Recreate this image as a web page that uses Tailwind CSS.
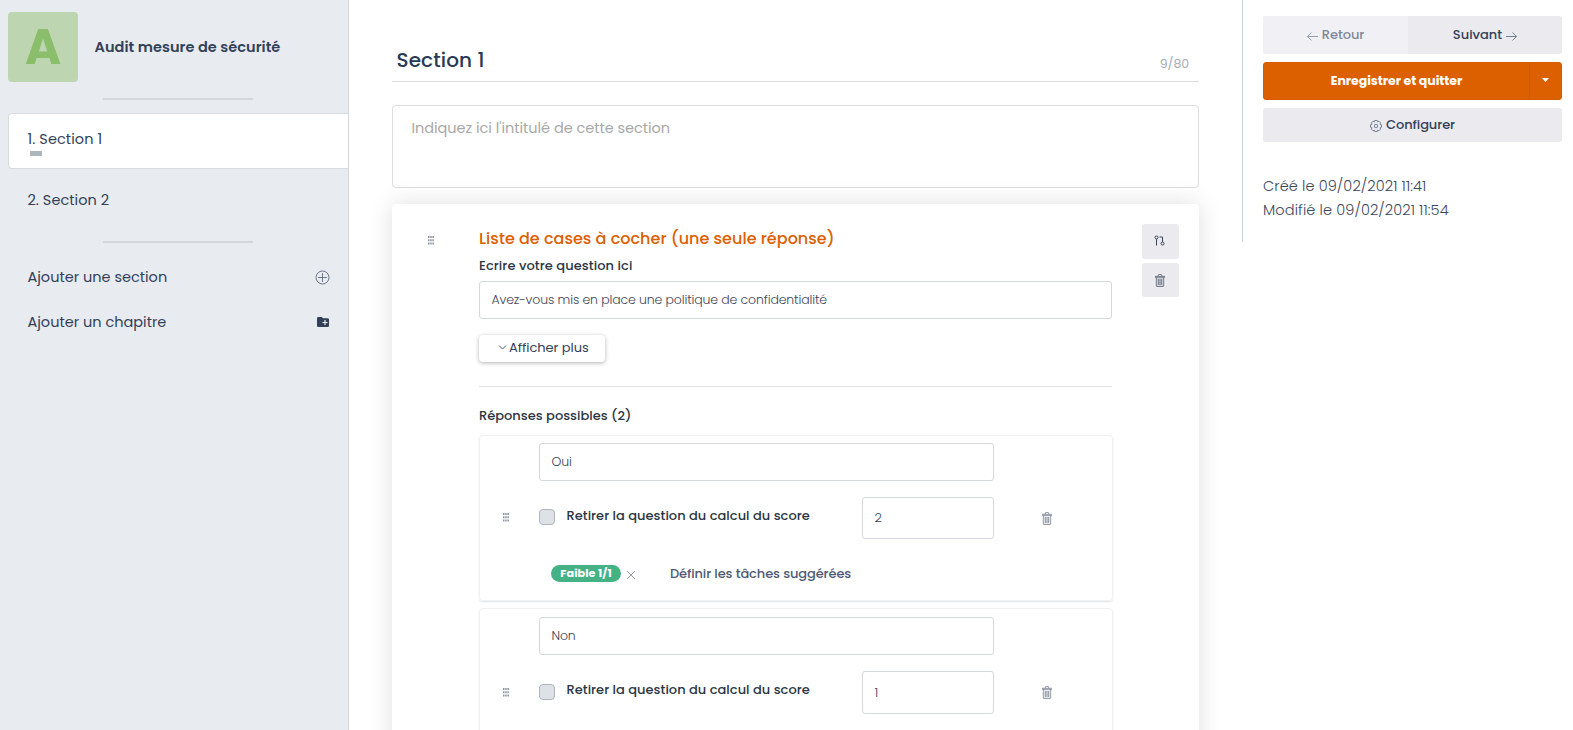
<!DOCTYPE html>
<html lang="fr">
<head>
<meta charset="utf-8">
<title>Audit mesure de sécurité</title>
<script src="https://cdn.jsdelivr.net/npm/@tailwindcss/browser@4"></script>
</head>
<body class="flex h-[730px] overflow-hidden bg-white font-['Poppins','Inter',sans-serif] text-[#324158]">

<svg class="hidden">
  <symbol id="grip" viewBox="0 0 6 9"><path fill="currentColor" d="M0 0h1.500v2H0zM2.200 0h1.500v2H2.200zM4.400 0h1.500v2H4.400zM0 3.200h1.500v2H0zM2.200 3.200h1.500v2H2.200zM4.400 3.200h1.500v2H4.400zM0 6.400h1.500v2H0zM2.200 6.400h1.500v2H2.200zM4.400 6.400h1.500v2H4.400z"/></symbol>
  <symbol id="trash" viewBox="0 0 10 13"><path fill="currentColor" fill-opacity=".18" d="M0 2h10v2H9v9H1V4H0z"/><g fill="none" stroke="currentColor" stroke-width=".8"><path d="M0 2.300h10M0 3.300h10M3.300 2V1q0-.5.5-.5h2.400q.5 0 .5.5v1M1.300 3.200v8.600q0 .7.7.7h6q.7 0 .7-.7V3.200M3.400 5v6M5 5v6M6.600 5v6"/></g></symbol>
</svg>

<aside class="flex h-full w-[349px] shrink-0 flex-col border-r border-[#d3d7dc] bg-[#e8ebf0]">
  <div class="mt-3 ml-2 flex h-[70px] items-center gap-4">
    <div class="flex size-[70px] items-center justify-center rounded bg-[#bdd6b1] text-[49px] leading-none font-bold text-[#8bbe6a]">A</div>
    <h1 class="pt-0.5 pl-[0.5px] text-[14.5px] font-semibold tracking-[0.05px] whitespace-nowrap">Audit mesure de sécurité</h1>
  </div>
  <div class="mt-4 ml-[103px] h-0.5 w-[150px] bg-[#d3d7dc]"></div>
  <div class="mt-[13px] ml-2 h-14 rounded-l border border-r-0 border-[#d8dbdf] bg-white pl-[18.500px]">
    <div class="mt-4 text-[14.5px] leading-[18px] tracking-[0.08px]">1. Section 1</div>
    <div class="mt-[3px] ml-[2.500px] h-[5px] w-3 bg-[#adb5bd]"></div>
  </div>
  <div class="mt-[22px] ml-[27.500px] text-[14.5px] leading-[18px] tracking-[0.03px]">2. Section 2</div>
  <div class="mt-8 ml-[103px] h-0.5 w-[150px] bg-[#d3d7dc]"></div>
  <div class="mt-[25px] ml-[27.500px] flex h-[18px] items-center justify-between pr-[18px] text-[14.5px] leading-[18px]">
    <span>Ajouter une section</span>
    <svg class="size-[15px]" viewBox="0 0 15 15" fill="none" stroke="#6b788b"><circle cx="7.5" cy="7.5" r="6.5"/><path d="M7.5 3v9M3 7.5h9"/></svg>
  </div>
  <div class="mt-[27px] ml-[27.500px] flex h-[18px] items-center justify-between pr-[19px] text-[14.5px] leading-[18px]">
    <span>Ajouter un chapitre</span>
    <svg class="h-[10px] w-3" viewBox="0 0 12 10"><path fill="#324158" d="M1.200 0h3.600L6 1.200h4.800q1.200 0 1.200 1.200v6.400Q12 10 10.800 10H1.200Q0 10 0 8.800V1.200Q0 0 1.200 0z"/><path stroke="#e8ebf0" stroke-width="1.200" d="M8 3v5M5.500 5.500h5"/></svg>
  </div>
</aside>

<main class="h-full w-[893px] shrink-0 overflow-hidden px-[43px]">
  <div class="flex h-[82px] justify-between border-b border-[#dcdddf] pr-2.5 pl-[4.500px]">
    <h2 class="mt-[48px] text-[20px] leading-6 font-medium tracking-[0.1px] text-[#2a3953]">Section 1</h2>
    <span class="mt-[55px] text-[12.500px] leading-[18px] tracking-[-0.1px] text-[#a5adb8]">9/80</span>
  </div>
  <div class="mt-[23px] h-[83px] rounded border border-[#dcdddf] pt-[12px] pl-[18.500px] text-[14.5px] leading-[20px] tracking-[-0.03px] text-[#a8a8a8]">Indiquez ici l'intitulé de cette section</div>

  <section class="mt-4 flex h-[600px] rounded shadow-[0_0_24px_rgba(0,0,0,0.13)]">
    <div class="w-[87px] shrink-0 pt-8 pl-9"><svg class="h-[9px] w-1.5 text-[#8d95a3]"><use href="#grip"/></svg></div>
    <div class="w-[634px] shrink-0">
      <h3 class="mt-[24px] text-[16px] leading-[22px] font-medium tracking-[0.02px] text-[#dd6000]">Liste de cases à cocher (une seule réponse)</h3>
      <div class="mt-[7px] text-[13px] leading-[18px] font-medium tracking-[0.07px] text-[#2b3644]">Ecrire votre question ici</div>
      <div class="mt-[6px] flex h-[38px] w-[633px] items-center rounded-[3px] border border-[#d5d8df] pl-[11.500px] text-[12.500px] font-light tracking-[-0.13px] text-[#3c4457]">Avez-vous mis en place une politique de confidentialité</div>
      <div class="mt-4 flex h-[27px] w-[126px] items-center rounded pl-[19px] text-[13px] leading-none tracking-[-0.03px] shadow-[0_1px_4px_rgba(0,0,0,0.3)]">
        <svg class="mr-0.5 mb-1 h-2 w-[9px]" viewBox="0 0 9 8" fill="none" stroke="#4d5b70"><path d="m1 2.500 3.500 3.500L8 2.500"/></svg>
        <span class="mb-0.5">Afficher plus</span>
      </div>
      <div class="mt-6 h-px w-[633px] bg-[#e2e4e6]"></div>
      <div class="mt-5 text-[13px] leading-[18px] font-medium text-[#2b3644]">Réponses possibles (2)</div>

      <div class="mt-[10px] h-[166px] rounded border border-[#eff1f3] pt-[7px] shadow-[0_1px_2px_rgba(40,60,80,0.14)]">
        <div class="ml-[59px] flex h-[38px] w-[455px] items-center rounded-[3px] border border-[#d5d8df] pl-[11.500px] text-[12.500px] font-light tracking-[-0.1px] text-[#3c4457]">Oui</div>
        <div class="mt-4 flex h-[42px]">
          <svg class="mt-4 ml-[23px] h-[9px] w-1.5 text-[#8d95a3]"><use href="#grip"/></svg>
          <div class="mt-3 ml-[30px] size-4 rounded border border-[#adb5bd] bg-[#dee2e6]"></div>
          <div class="mt-[10px] ml-[11.500px] w-[295.500px] text-[13px] leading-[18px] font-medium tracking-[0.02px] text-[#2b3644]">Retirer la question du calcul du score</div>
          <div class="flex h-[42px] w-[132px] items-center rounded-[3px] border border-[#d5d8df] pl-[11.500px] text-[13px] font-light text-[#3c4457]">2</div>
          <svg class="mt-[15px] ml-12 h-[13px] w-2.5 text-[#7d8794]"><use href="#trash"/></svg>
        </div>
        <div class="mt-[24px] ml-[71px] flex h-[21px] items-center">
          <div class="flex h-[17px] w-[70px] items-center justify-center rounded-full bg-[#44b284] text-[11.200px] font-bold tracking-[0.08px] text-white">Faible 1/1</div>
          <svg class="mt-0.5 ml-1.5 size-2" viewBox="0 0 8 8" stroke="#7d8794" stroke-width=".8"><path d="m0 0 8 8M8 0 0 8"/></svg>
          <span class="ml-[35px] text-[13px] leading-[18px] font-medium tracking-[-0.11px] text-[#4f5a73]">Définir les tâches suggérées</span>
        </div>
      </div>

      <div class="mt-[7px] h-[168px] rounded border border-[#eff1f3] pt-2 shadow-[0_1px_2px_rgba(40,60,80,0.14)]">
        <div class="ml-[59px] flex h-[38px] w-[455px] items-center rounded-[3px] border border-[#d5d8df] pl-[11.500px] text-[12.500px] font-light tracking-[-0.2px] text-[#3c4457]">Non</div>
        <div class="mt-4 flex h-[43px]">
          <svg class="mt-[17px] ml-[23px] h-[9px] w-1.5 text-[#8d95a3]"><use href="#grip"/></svg>
          <div class="mt-[13px] ml-[30px] size-4 rounded border border-[#adb5bd] bg-[#dee2e6]"></div>
          <div class="mt-[10px] ml-[11.500px] w-[295.500px] text-[13px] leading-[18px] font-medium tracking-[0.02px] text-[#2b3644]">Retirer la question du calcul du score</div>
          <div class="flex h-[43px] w-[132px] items-center rounded-[3px] border border-[#d5d8df] pl-[11.500px] text-[13px] font-light text-[#3c4457]">1</div>
          <svg class="mt-[15px] ml-12 h-[13px] w-2.5 text-[#7d8794]"><use href="#trash"/></svg>
        </div>
      </div>
    </div>
    <div class="mt-5 ml-[29px] flex w-[37px] flex-col gap-1">
      <div class="flex h-[35px] items-center justify-center rounded-[3px] bg-[#eaeaef]">
        <svg class="mr-0.5 mb-0.5 size-[11px]" viewBox="0 0 11 11" fill="none" stroke="#3a4358"><circle cx="2.500" cy="2.500" r="1.500"/><path d="M2.500 4v6.500M5.500 2h3v5"/><circle cx="8.500" cy="8.500" r="1.500"/></svg>
      </div>
      <div class="flex h-[34px] items-center justify-center rounded-[3px] bg-[#eaeaef]"><svg class="mr-[1px] h-[13px] w-2.5 text-[#5f6a7a]"><use href="#trash"/></svg></div>
    </div>
  </section>
</main>

<aside class="h-[242px] w-[331px] shrink-0 border-l border-[#c5d0dc] pt-4 pl-5 text-[13px]">
  <div class="flex h-[38px] w-[299px] overflow-hidden rounded-[3px] bg-[#eaeaef] font-medium">
    <div class="flex w-[145px] items-center justify-center gap-1 bg-[#f1f0f5] tracking-[-0.08px] text-[#7f8898]">
      <svg class="mt-0.5 h-[9px] w-[11px]" viewBox="0 0 11 9" fill="none" stroke="currentColor" stroke-width=".8"><path d="M11 4.500H.5m4-4-4 4 4 4"/></svg>
      <span>Retour</span>
    </div>
    <div class="flex w-[154px] items-center justify-center gap-1">
      <span>Suivant</span>
      <svg class="mt-0.5 h-[9px] w-[11px]" viewBox="0 0 11 9" fill="none" stroke="#56647a" stroke-width=".8"><path d="M0 4.500h10.500m-4-4 4 4-4 4"/></svg>
    </div>
  </div>
  <div class="mt-2 flex h-[38px] w-[299px] rounded-[3px] border border-[#d65c00] bg-[#dd6000] text-white">
    <div class="flex w-[266px] items-center justify-center border-r border-[#cf5a04] text-[12.500px] font-bold tracking-[-0.05px]">Enregistrer et quitter</div>
    <div class="flex flex-1 items-center justify-center"><svg class="mb-0.5 h-1 w-[7px]" viewBox="0 0 7 4"><path fill="#fff" d="M0 0h7L3.500 4z"/></svg></div>
  </div>
  <div class="mt-2 flex h-[34px] w-[299px] items-center justify-center gap-1 rounded-[3px] bg-[#eaeaef] font-medium tracking-[-0.08px]">
    <svg class="mt-0.5 size-3" viewBox="0 0 12 12" fill="none" stroke="#69758a" stroke-width=".9"><path d="M4.800.5h2.400l.4 1.300 1.300-.6 1.700 1.700-.6 1.300 1.500.6v2.400l-1.500.6.6 1.300-1.700 1.700-1.300-.6-.4 1.300H4.800l-.4-1.300-1.300.6-1.700-1.700.6-1.300-1.500-.6V4.800L2 4.200l-.6-1.300 1.700-1.700 1.300.6z"/><circle cx="6" cy="6" r="1.700"/></svg>
    <span>Configurer</span>
  </div>
  <div class="mt-8 text-[14.5px] leading-6 font-light tracking-[0.11px] text-[#3b475b]">
    <div>Créé le 09/02/2021 11:41</div>
    <div>Modifié le 09/02/2021 11:54</div>
  </div>
</aside>
</body>
</html>
